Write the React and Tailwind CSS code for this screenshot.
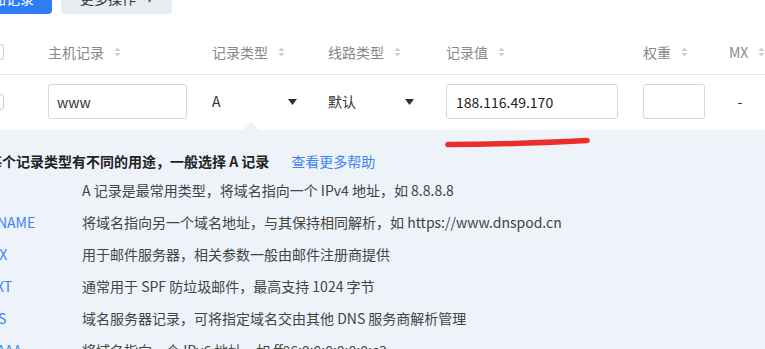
import { useState } from "react";

const font = { fontFamily: '"Noto Sans CJK SC", "Noto Sans", sans-serif' };

function SortIcon() {
  return (
    <svg width="7" height="10" viewBox="0 0 7 10" className="ml-[10px] shrink-0">
      <path d="M3.5 0.5 L6.5 4 L0.5 4 Z" fill="#c8cfdb" />
      <path d="M3.5 9.5 L6.5 6 L0.5 6 Z" fill="#c8cfdb" />
    </svg>
  );
}

function Caret() {
  return (
    <svg width="9" height="6" viewBox="0 0 9 6" className="shrink-0">
      <path d="M0 0 L9 0 L4.5 6 Z" fill="#2b2f36" />
    </svg>
  );
}

function HeadCell({ label, width, sort = true }) {
  return (
    <div className={`flex items-center shrink-0 ${width}`}>
      <span>{label}</span>
      {sort && <SortIcon />}
    </div>
  );
}

const types = [
  { name: "A", desc: "A 记录是最常用类型，将域名指向一个 IPv4 地址，如 8.8.8.8" },
  { name: "CNAME", desc: "将域名指向另一个域名地址，与其保持相同解析，如 https://www.dnspod.cn" },
  { name: "MX", desc: "用于邮件服务器，相关参数一般由邮件注册商提供" },
  { name: "TXT", desc: "通常用于 SPF 防垃圾邮件，最高支持 1024 字节" },
  { name: "NS", desc: "域名服务器记录，可将指定域名交由其他 DNS 服务商解析管理" },
  { name: "AAAA", desc: "将域名指向一个 IPv6 地址，如 ff06:0:0:0:0:0:0:c3" },
];

export default function App() {
  const [host, setHost] = useState("www");
  const [value, setValue] = useState("188.116.49.170");
  const [weight, setWeight] = useState("");

  return (
    <div className="relative w-[765px] h-[349px] overflow-hidden bg-white text-[14px]" style={font}>
      {/* toolbar */}
      <div className="flex gap-[9px] -mt-[18px] -ml-[40px]">
        <button className="h-[32px] w-[92px] rounded-[4px] bg-[#2e7df6] text-white">添加记录</button>
        <button className="h-[32px] w-[111px] rounded-[4px] bg-[#e8ecf3] text-[#333] flex items-center pl-[19px] gap-[11px]">
          更多操作 <span className="text-[10px] text-[#666]">▾</span>
        </button>
      </div>

      {/* header */}
      <div className="h-[61px] pt-[16px] flex items-center border-b border-[#e4e6eb] text-[#888]">
        <div className="w-[48px] shrink-0 flex items-center">
          <div className="-ml-[12px] w-[16px] h-[16px] rounded-[3px] border border-[#c9ced6] bg-white" />
        </div>
        <HeadCell label="主机记录" width="w-[164px]" />
        <HeadCell label="记录类型" width="w-[116px]" />
        <HeadCell label="线路类型" width="w-[118px]" />
        <HeadCell label="记录值" width="w-[197px]" />
        <HeadCell label="权重" width="w-[86px]" />
        <HeadCell label="MX" width="w-[60px]" />
      </div>

      {/* data row */}
      <div className="flex items-center pt-[9px] pb-[11px] text-[#333]">
        <div className="w-[48px] shrink-0 flex items-center">
          <div className="-ml-[12px] w-[16px] h-[16px] rounded-[3px] border border-[#c9ced6] bg-white" />
        </div>
        <div className="w-[164px] shrink-0">
          <input
            value={host}
            onChange={(e) => setHost(e.target.value)}
            className="w-[139px] h-[35px] rounded-[3px] border border-[#d5d8de] px-[8px] text-[#333] outline-none"
          />
        </div>
        <div className="w-[116px] shrink-0 flex items-center">
          <div className="w-[85px] flex items-center justify-between">
            <span>A</span>
            <Caret />
          </div>
        </div>
        <div className="w-[118px] shrink-0 flex items-center">
          <div className="w-[86px] flex items-center justify-between">
            <span>默认</span>
            <Caret />
          </div>
        </div>
        <div className="w-[197px] shrink-0">
          <input
            value={value}
            onChange={(e) => setValue(e.target.value)}
            className="w-[172px] h-[35px] rounded-[3px] border border-[#d5d8de] px-[9px] text-[#222] outline-none"
          />
        </div>
        <div className="w-[86px] shrink-0">
          <input
            value={weight}
            onChange={(e) => setWeight(e.target.value)}
            className="w-[62px] h-[35px] rounded-[3px] border border-[#d5d8de] px-[8px] outline-none"
          />
        </div>
        <div className="w-[22px] shrink-0 text-center">-</div>
      </div>

      {/* help panel */}
      <div className="relative bg-[#eef2f9] h-[240px]">
        <div className="absolute left-[243px] -top-[8px] w-0 h-0 border-l-[8px] border-r-[8px] border-b-[8px] border-l-transparent border-r-transparent border-b-[#eef2f9]" />
        <div className="-ml-[12px] pt-[20px]">
          <div className="flex items-center h-[22px]">
            <span className="font-bold text-[#222]">每个记录类型有不同的用途，一般选择 A 记录</span>
            <a className="ml-[22px] text-[#3d85ec]" href="#">查看更多帮助</a>
          </div>
          <div className="mt-[2px]">
            {types.map((t) => (
              <div key={t.name} className="flex items-center h-[32px]">
                <span className="w-[94px] shrink-0 text-[#3d85ec]">{t.name}</span>
                <span className="text-[#444]">{t.desc}</span>
              </div>
            ))}
          </div>
        </div>
      </div>

      {/* red marker annotation */}
      <svg className="absolute left-[444px] top-[135px]" width="150" height="14" viewBox="0 0 150 14">
        <path d="M4 9.5 C 40 9.5, 95 8, 143 5.5" stroke="#ea2e2c" strokeWidth="5.5" strokeLinecap="round" fill="none" />
      </svg>
    </div>
  );
}
